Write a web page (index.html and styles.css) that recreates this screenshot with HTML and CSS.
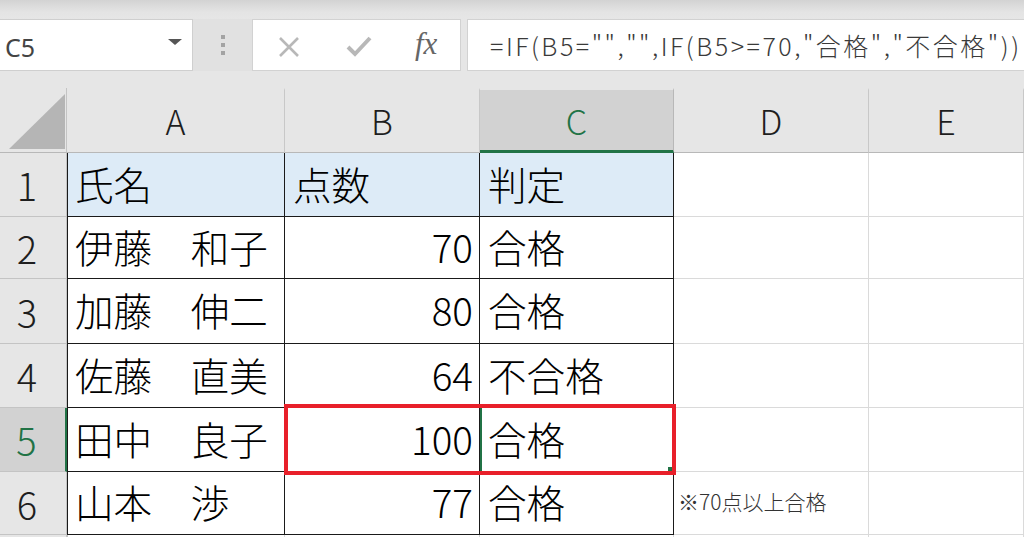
FILE: index.html
```html
<!DOCTYPE html>
<html lang="ja">
<head>
<meta charset="utf-8">
<link rel="stylesheet" href="styles.css">
</head>
<body>
<div class="app">
  <div class="toolbar">
    <div class="namebox">
      <span class="name">C5</span>
      <span class="caret"></span>
    </div>
    <div class="grip"><i></i><i></i><i></i></div>
    <div class="fxbox">
      <svg class="ico" width="24" height="22" viewBox="0 0 24 22"><path d="M3 2 L21 20 M21 2 L3 20" stroke="#b8b8b8" stroke-width="2.6" fill="none"/></svg>
      <svg class="ico" width="26" height="22" viewBox="0 0 26 22"><path d="M2 12 L9 19 L24 3" stroke="#b8b8b8" stroke-width="4" fill="none" stroke-linejoin="miter"/></svg>
      <span class="fx">fx</span>
    </div>
    <div class="formula">=IF(B5="","",IF(B5&gt;=70,"合格","不合格"))</div>
  </div>

  <div class="sheet">
    <div class="corner"><span class="tri"></span></div>
    <div class="colhead">A</div>
    <div class="colhead">B</div>
    <div class="colhead active">C</div>
    <div class="colhead">D</div>
    <div class="colhead">E</div>

    <div class="rowhead">1</div>
    <div class="cell t a hd">氏名</div>
    <div class="cell t hd">点数</div>
    <div class="cell t hd">判定</div>
    <div class="cell"></div>
    <div class="cell"></div>

    <div class="rowhead">2</div>
    <div class="cell t a">伊藤　和子</div>
    <div class="cell t num">70</div>
    <div class="cell t">合格</div>
    <div class="cell"></div>
    <div class="cell"></div>

    <div class="rowhead">3</div>
    <div class="cell t a">加藤　伸二</div>
    <div class="cell t num">80</div>
    <div class="cell t">合格</div>
    <div class="cell"></div>
    <div class="cell"></div>

    <div class="rowhead">4</div>
    <div class="cell t a">佐藤　直美</div>
    <div class="cell t num">64</div>
    <div class="cell t">不合格</div>
    <div class="cell"></div>
    <div class="cell"></div>

    <div class="rowhead active">5</div>
    <div class="cell t a">田中　良子</div>
    <div class="cell t num">100</div>
    <div class="cell t sel">合格</div>
    <div class="cell"></div>
    <div class="cell"></div>

    <div class="rowhead">6</div>
    <div class="cell t a">山本　渉</div>
    <div class="cell t num">77</div>
    <div class="cell t">合格</div>
    <div class="cell note">※70点以上合格</div>
    <div class="cell"></div>

    <div class="rowhead"></div>
    <div class="cell a7"></div>
    <div class="cell"></div>
    <div class="cell"></div>
    <div class="cell"></div>
    <div class="cell"></div>

    <div class="handle"></div>
    <div class="redbox"></div>
  </div>
</div>
</body>
</html>
```

FILE: styles.css
```css
* { box-sizing: border-box; }
html, body { margin: 0; padding: 0; }
body {
  width: 1024px;
  height: 537px;
  overflow: hidden;
  background: #e6e6e6;
  font-family: "Noto Sans CJK JP", "Noto Sans", sans-serif;
}
.app { width: 1024px; height: 537px; display: flex; flex-direction: column; }

/* ---------- formula bar ---------- */
.toolbar {
  height: 88px;
  flex: none;
  display: flex;
  align-items: flex-start;
  padding-top: 19px;
  background: linear-gradient(#d3d3d3 0px, #e4e4e4 12px, #e6e6e6 19px);
}
.namebox {
  width: 193px;
  height: 52px;
  background: #fff;
  border: 1px solid #cfcfcf;
  border-left: none;
  display: flex;
  align-items: center;
  justify-content: space-between;
  padding: 0 10px 0 5px;
}
.name { font-family: "Noto Sans", sans-serif; font-size: 25px; color: #444; margin-top: 3px; }
.caret {
  width: 0; height: 0;
  border-left: 7px solid transparent;
  border-right: 7px solid transparent;
  border-top: 6px solid #555;
  margin-top: -6px;
}
.grip {
  width: 59px;
  height: 52px;
  display: flex;
  flex-direction: column;
  align-items: center;
  justify-content: center;
  gap: 4px;
  background: #e1e1e1;
}
.grip i { display: block; width: 4px; height: 4px; background: #a3a3a3; }
.fxbox {
  width: 209px;
  height: 52px;
  background: #fff;
  border: 1px solid #d2d2d2;
  display: flex;
  align-items: center;
  padding-left: 24px;
  gap: 0;
}
.fxbox .ico:first-child { margin-top: 3px; }
.fxbox .ico:nth-child(2) { margin-left: 45px; margin-top: 2px; }
.fx {
  font-family: "Liberation Serif", "DejaVu Serif", serif;
  font-style: italic;
  font-size: 31px;
  color: #666;
  margin-left: 43px;
  margin-top: -2px;
}
.formula {
  margin-left: 6px;
  flex: 1;
  height: 52px;
  background: #fff;
  border: 1px solid #d2d2d2;
  border-right: none;
  display: flex;
  align-items: center;
  padding-left: 22px;
  font-size: 25px;
  font-weight: 300;
  color: #3a3a3a;
  white-space: nowrap;
  overflow: hidden;
  letter-spacing: 2.5px;
}

/* ---------- sheet ---------- */
.sheet {
  position: relative;
  flex: 1;
  display: grid;
  grid-template-columns: 67px 218px 195px 194px 195px 155px;
  grid-template-rows: 65px 64px 62px 65px 64px 64px 63px 1fr;
  background: #fff;
}
.corner, .colhead, .rowhead {
  background: #e6e6e6;
  color: #1e1e1e;
}
.corner {
  border-right: 1px solid #c4c4c4;
  border-bottom: 1px solid #b8b8b8;
  position: relative;
}
.tri {
  position: absolute;
  left: 9px;
  top: 6px;
  width: 56px;
  height: 55px;
  background: #b5b5b5;
  clip-path: polygon(100% 0, 100% 100%, 0 100%);
}
.colhead {
  display: flex;
  align-items: center;
  justify-content: center;
  font-size: 34px;
  font-weight: 300;
  border-right: 1px solid #c8c8c8;
  border-bottom: 1px solid #b8b8b8;
  border-top: 2px solid #e6e6e6;
  padding-bottom: 2px;
}
.colhead.active {
  background: #d2d2d2;
  color: #217346;
  border-bottom: 3px solid #217346;
  border-right-color: #b8b8b8;
  padding-top: 2px;
}
.rowhead {
  display: flex;
  align-items: center;
  justify-content: center;
  padding-right: 12px;
  font-size: 38px;
  font-weight: 300;
  border-right: 1px solid #c4c4c4;
  border-bottom: 1px solid #c4c4c4;
}
.rowhead.active {
  background: #d2d2d2;
  color: #217346;
  border-right: 2px solid #217346;
}

.cell {
  display: flex;
  align-items: center;
  padding: 0 7px 4px 8px;
  font-size: 38.6px;
  font-weight: 300;
  color: #000;
  white-space: nowrap;
  border-right: 1px solid #dadada;
  border-bottom: 1px solid #dadada;
}
.cell.t { border-right-color: #1a1a1a; border-bottom-color: #1a1a1a; }
.cell.a { box-shadow: inset 1px 0 0 #1a1a1a; }
.cell.a7 { box-shadow: inset 1px 0 0 #c4c4c4; }
.cell.hd { background: #ddebf7; }
.cell.num { justify-content: flex-end; padding-right: 6px; }
.cell.sel { box-shadow: inset 2px 0 0 #217346; padding-left: 8px; }
.cell.note {
  font-size: 21px;
  color: #333;
  padding-left: 4px;
  padding-bottom: 4px;
  overflow: visible;
}

.redbox {
  position: absolute;
  left: 284px;
  top: 316px;
  width: 392px;
  height: 71px;
  border: 4px solid #e8202a;
  pointer-events: none;
}
.handle {
  position: absolute;
  left: 668px;
  top: 379px;
  width: 4px;
  height: 4px;
  background: #217346;
}
```
